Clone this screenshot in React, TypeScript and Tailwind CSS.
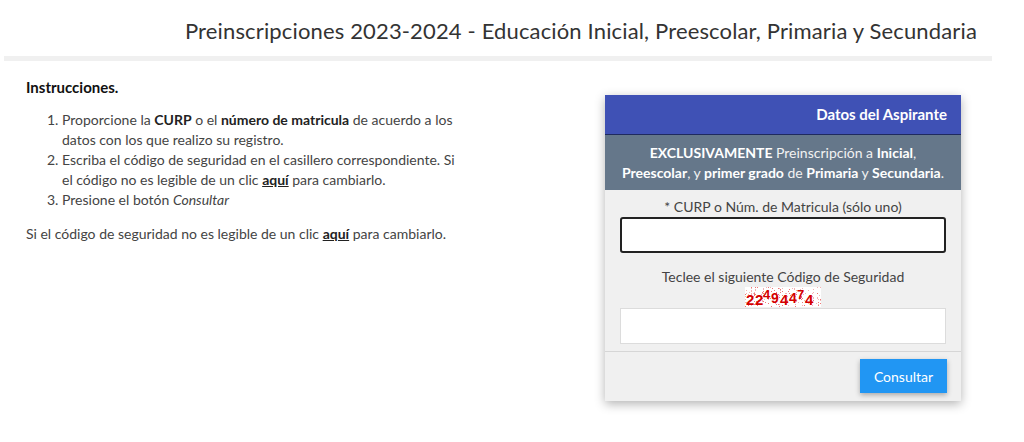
import React from "react";

function Captcha() {
  const dots: React.ReactNode[] = [];
  let s = 7;
  const rnd = () => {
    s = (s * 9301 + 49297) % 233280;
    return s / 233280;
  };
  for (let i = 0; i < 170; i++) {
    dots.push(
      <rect key={i} x={Math.floor(rnd() * 76)} y={Math.floor(rnd() * 20)} width={1} height={1} fill={rnd() > 0.5 ? "#e77" : "#f3b3b3"} />
    );
  }
  const chars = [
    { c: "2", x: 1, y: 18, s: 15 },
    { c: "2", x: 10, y: 18, s: 15 },
    { c: "4", x: 18, y: 12, s: 13 },
    { c: "9", x: 26, y: 16, s: 14 },
    { c: "4", x: 35, y: 18, s: 15 },
    { c: "4", x: 44, y: 16, s: 14 },
    { c: "7", x: 52, y: 12, s: 13 },
    { c: "4", x: 60, y: 18, s: 15 },
  ];
  return (
    <svg width="76" height="20" viewBox="0 0 76 20" className="block">
      <rect width="76" height="20" fill="#fff" />
      {dots}
      {chars.map((ch, i) => (
        <text key={i} x={ch.x} y={ch.y} fill="#d40000" fontSize={ch.s} fontWeight="bold" fontFamily="'Liberation Sans', Arial, sans-serif">
          {ch.c}
        </text>
      ))}
    </svg>
  );
}

export default function App() {
  return (
    <div className="w-[1024px] h-[442px] bg-white text-[#444] overflow-hidden" style={{ fontFamily: "Lato, 'Open Sans', sans-serif" }}>
      <div className="h-[56px] w-[992px] flex items-center justify-end pr-[15px] pt-[4px]">
        <h1 className="text-[22px] text-[#333] tracking-[0.15px]">
          Preinscripciones 2023-2024 - Educación Inicial, Preescolar, Primaria y Secundaria
        </h1>
      </div>
      <div className="ml-[4px] w-[988px] h-[5px] bg-[#f0f0f0]" />
      <div className="flex">
        <div className="w-[605px] shrink-0 pl-[26px] pt-[16px] text-[14px] leading-[20px]">
          <p className="font-bold text-[15px] text-[#111]">Instrucciones.</p>
          <ol className="list-decimal pl-[36px] mt-[13px] w-[438px]">
            <li>
              Proporcione la <b className="text-[#222]">CURP</b> o el <b className="text-[#222]">número de matricula</b> de acuerdo a los datos con los que realizo su registro.
            </li>
            <li>
              Escriba el código de seguridad en el casillero correspondiente. Si el código no es legible de un clic{" "}
              <b className="underline text-[#222]">aquí</b> para cambiarlo.
            </li>
            <li>
              Presione el botón <i>Consultar</i>
            </li>
          </ol>
          <p className="mt-[14px]">
            Si el código de seguridad no es legible de un clic <b className="underline text-[#222]">aquí</b> para cambiarlo.
          </p>
        </div>
        <div className="mt-[34px] w-[356px] shrink-0 bg-[#f0f0f0] shadow-[0_3px_10px_rgba(0,0,0,0.3)]">
          <div className="h-[40px] bg-[#3f51b5] border-b border-[#1f2a5e] flex items-center justify-end pr-[14px] text-white font-bold text-[15px]">
            Datos del Aspirante
          </div>
          <div className="h-[55px] bg-[#65778a] text-[#f2f2f2] text-[14px] leading-[20px] text-center pt-[8px]">
            <b className="text-white">EXCLUSIVAMENTE</b> Preinscripción a <b className="text-white">Inicial</b>,<br />
            <b className="text-white">Preescolar</b>, y <b className="text-white">primer grado</b> de <b className="text-white">Primaria</b> y <b className="text-white">Secundaria</b>.
          </div>
          <div className="px-[15px] pt-[7px] pb-[7px] flex flex-col items-center text-[14px]">
            <label className="leading-[20px]">* CURP o Núm. de Matricula (sólo uno)</label>
            <input className="w-full h-[36px] bg-white border-2 border-[#222] rounded-[3px] outline-none" />
            <label className="mt-[14px] leading-[20px]">Teclee el siguiente Código de Seguridad</label>
            <Captcha />
            <input className="mt-[1px] w-full h-[36px] bg-white border border-[#dcdcdc] outline-none" />
          </div>
          <div className="border-t border-[#d6d6d6] h-[50px] flex items-start justify-end pr-[14px] pt-[7px]">
            <button className="w-[87px] h-[34px] bg-[#2196f3] text-white text-[14px] shadow-[0_2px_5px_rgba(0,0,0,0.3)]">
              Consultar
            </button>
          </div>
        </div>
      </div>
    </div>
  );
}
